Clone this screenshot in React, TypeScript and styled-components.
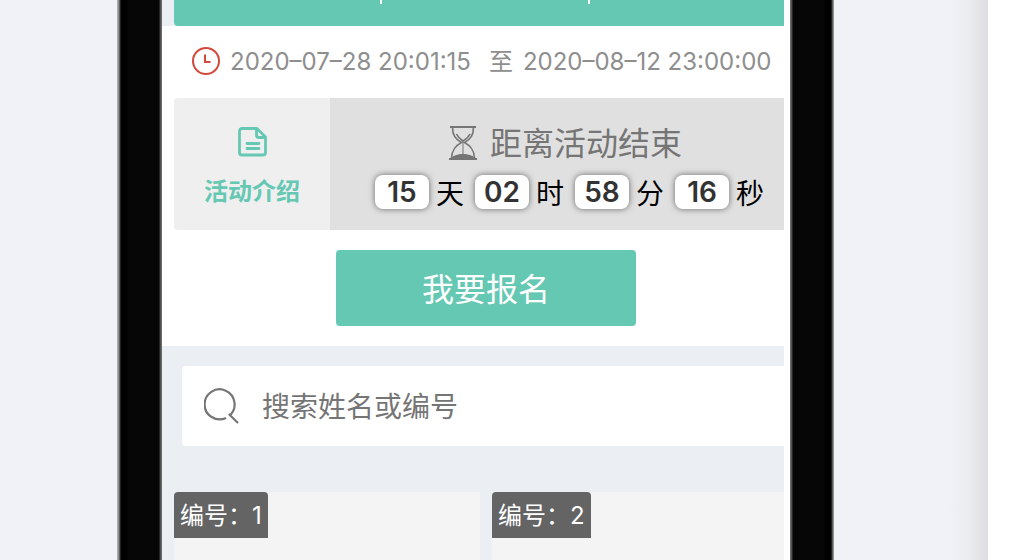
import React from "react";
import styled, { createGlobalStyle } from "styled-components";

const GlobalStyle = createGlobalStyle`
  *, *::before, *::after { box-sizing: border-box; }
  body {
    margin: 0;
    background: #fff;
    font-family: Inter, "Noto Sans CJK SC", sans-serif;
    overflow: hidden;
  }
`;

const green = "#65c8b3";

const Stage = styled.div`
  display: flex;
  height: 100vh;
  margin-right: 40px;
  padding: 0 154px 0 117px;
  overflow: hidden;
  background: linear-gradient(to left, #dddde1 0, #e4e4e8 8px, #ebecf0 20px, #eff1f6 36px, #f0f2f7 50px);
  background-color: #f0f2f7;
`;

const Bezel = styled.div<{ $side: "left" | "right" }>`
  flex: none;
  width: ${(p) => (p.$side === "left" ? 45 : 44)}px;
  background: linear-gradient(
    to ${(p) => p.$side},
    #777 0,
    #444 2px,
    #060606 3px,
    #060606 34px,
    #000 35px,
    #000 41px,
    #444 42px,
    #aaa 44px
  );
`;

const Screen = styled.main`
  flex: 1;
  min-width: 0;
  padding-right: 6px;
  background: #fff;
`;

const Viewport = styled.div`
  height: 100%;
  overflow: hidden;
  background: #ebeff4;
`;

const Content = styled.div`
  margin-right: -26px;
`;

const Stats = styled.header`
  display: grid;
  grid-template-columns: repeat(3, 1fr);
  height: 26px;
  margin: 0 12px;
  border-radius: 0 0 4px 4px;
  background: ${green};
`;

const Stat = styled.div`
  height: 4px;
  border-right: 2px solid #fff;
  &:last-child { border-right: 0; }
`;

const Info = styled.section`
  padding: 0 12px 20px;
  background: #fff;
`;

const Period = styled.div`
  display: flex;
  align-items: center;
  height: 72px;
  padding-left: 17px;
  color: #8e8e8e;
  font-size: 24px;
  line-height: 32px;
  white-space: nowrap;
`;

const ClockIcon = styled.svg`
  flex: none;
  width: 30px;
  height: 30px;
  margin-right: 9px;
`;

const Until = styled.span`
  margin: 0 10px 0 18px;
`;

const Panel = styled.div`
  display: grid;
  grid-template-columns: 1fr 3fr;
  height: 132px;
  border-radius: 4px;
  overflow: hidden;
`;

const Intro = styled.a`
  display: flex;
  flex-direction: column;
  align-items: center;
  gap: 18px;
  padding-top: 28px;
  background: #efefef;
  color: ${green};
  font-size: 24px;
  font-weight: 700;
  line-height: 32px;
  text-decoration: none;
`;

const Countdown = styled.div`
  display: flex;
  flex-direction: column;
  align-items: center;
  padding-top: 26px;
  background: #e0e0e0;
`;

const CountdownTitle = styled.div`
  display: flex;
  align-items: flex-start;
  gap: 12px;
  height: 40px;
  padding-left: 2px;
  color: #757575;
  font-size: 32px;
  line-height: 40px;
`;

const Timer = styled.div`
  display: grid;
  grid-template-columns: repeat(4, 100px);
  margin-top: 8px;
  padding-left: 22px;
`;

const Unit = styled.div`
  display: flex;
  align-items: center;
  gap: 7px;
  height: 40px;
  color: #000;
  font-size: 28px;
`;

const Digits = styled.span`
  width: 54px;
  height: 34px;
  border-radius: 8px;
  background: #fff;
  box-shadow: 0 0 6px #666;
  color: #333;
  font-size: 28px;
  font-weight: 600;
  line-height: 34px;
  text-align: center;
`;

const JoinButton = styled.button`
  display: block;
  width: 300px;
  height: 76px;
  margin: 20px auto 0;
  padding: 0 0 2px;
  border: 0;
  border-radius: 4px;
  background: ${green};
  color: #fff;
  font: inherit;
  font-size: 32px;
`;

const Search = styled.label`
  display: flex;
  align-items: center;
  gap: 22px;
  height: 80px;
  margin: 20px 20px 46px;
  padding-left: 22px;
  border-radius: 4px;
  background: #fff;
`;

const SearchInput = styled.input`
  flex: 1;
  min-width: 0;
  height: 44px;
  padding: 2px 0 0;
  border: 0;
  outline: 0;
  background: none;
  font: inherit;
  font-size: 28px;
  &::placeholder { color: #757575; opacity: 1; }
`;

const Cards = styled.div`
  display: grid;
  grid-template-columns: 1fr 1fr;
  gap: 12px;
  padding: 0 12px;
`;

const Card = styled.article`
  min-height: 400px;
  background: #f4f4f4;
`;

const Tag = styled.span`
  display: inline-block;
  height: 46px;
  padding: 0 6px;
  border-radius: 4px 4px 0 0;
  background: #646464;
  color: #fff;
  font-size: 24px;
  line-height: 48px;
`;

const timer = [
  ["15", "天"],
  ["02", "时"],
  ["58", "分"],
  ["16", "秒"],
];

export default function App() {
  return (
    <>
      <GlobalStyle />
      <Stage>
        <Bezel $side="left" />
        <Screen>
          <Viewport>
            <Content>
              <Stats>
                <Stat />
                <Stat />
                <Stat />
              </Stats>
              <Info>
                <Period>
                  <ClockIcon viewBox="0 0 30 30" fill="none" stroke="#d2493b" strokeWidth="2" aria-hidden="true">
                    <circle cx="15" cy="14" r="13" />
                    <path d="M14 7.500V15H19.500" />
                  </ClockIcon>
                  <time>2020–07–28 20:01:15</time>
                  <Until>至</Until>
                  <time>2020–08–12 23:00:00</time>
                </Period>
                <Panel>
                  <Intro href="#intro">
                    <svg width="30" height="32" viewBox="0 0 30 32" fill="none" stroke={green} strokeWidth="2.8" strokeLinejoin="round" strokeLinecap="round" aria-hidden="true">
                      <path d="M20 2.500H5Q2.500 2.500 2.500 5V26.500Q2.500 29 5 29H26Q28.500 29 28.500 26.500V11Z" />
                      <path d="M19.500 3V9Q19.500 11.500 22 11.500H28" />
                      <path d="M10 17.500H22M10 22.500H22" />
                    </svg>
                    活动介绍
                  </Intro>
                  <Countdown>
                    <CountdownTitle>
                      <svg width="30" height="36" viewBox="0 0 30 36" fill="none" stroke="#757575" strokeWidth="1.6" aria-hidden="true">
                        <path d="M2 3H28" strokeWidth="2" />
                        <path d="M4.500 3C4.500 11 7 15 13.500 18.500C7 22 4 26 3.500 34M25.500 3C25.500 11 23 15 16.500 18.500C23 22 26 26 26.500 34" />
                        <path d="M8.500 10C10 13.500 12 15 15 17C18 15 20.500 13.500 22 10" />
                        <path d="M15 17V31" strokeWidth="1" />
                        <path d="M3 34.500C6 28.500 24 28.500 27 34.500Z" fill="#757575" stroke="none" />
                        <path d="M1 35H29" strokeWidth="2" />
                      </svg>
                      距离活动结束
                    </CountdownTitle>
                    <Timer>
                      {timer.map(([value, unit]) => (
                        <Unit key={unit}>
                          <Digits>{value}</Digits>
                          {unit}
                        </Unit>
                      ))}
                    </Timer>
                  </Countdown>
                </Panel>
                <JoinButton type="button">我要报名</JoinButton>
              </Info>
              <Search>
                <svg width="36" height="36" viewBox="0 0 36 36" fill="none" stroke="#757575" strokeWidth="2.2" aria-hidden="true">
                  <path d="M22 29.900A15 15 0 1 1 25.500 27.600" />
                  <path d="M24.800 26L34 35" />
                </svg>
                <SearchInput type="text" aria-label="搜索姓名或编号" placeholder="搜索姓名或编号" />
              </Search>
              <Cards>
                <Card>
                  <Tag>编号：1</Tag>
                </Card>
                <Card>
                  <Tag>编号：2</Tag>
                </Card>
              </Cards>
            </Content>
          </Viewport>
        </Screen>
        <Bezel $side="right" />
      </Stage>
    </>
  );
}
